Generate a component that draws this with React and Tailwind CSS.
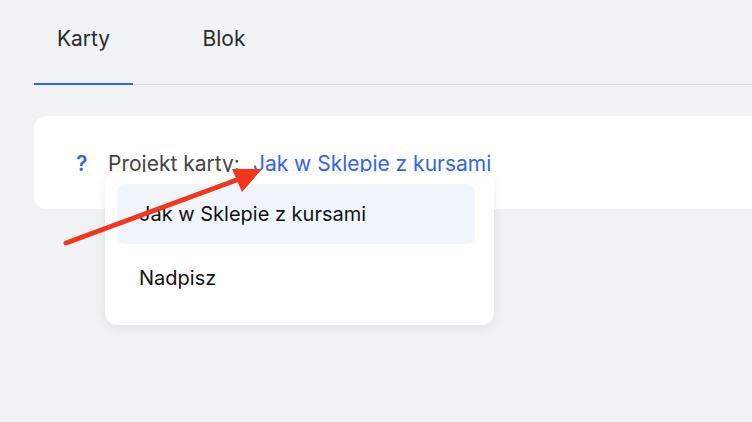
import React from 'react';

function Tabs() {
  return (
    <div className="flex items-end pl-[34px] pt-[22px]">
      <div className="flex">
        <div className="w-[99px] flex flex-col items-center">
          <span className="text-[21px] leading-[34px] text-[#2b2b2b] h-[61px]">Karty</span>
          <div className="h-[2px] w-full bg-[#2f64f0]" />
        </div>
        <div className="w-[136px] flex flex-col items-center">
          <span className="text-[21px] leading-[34px] text-[#2b2b2b] h-[61px] pl-[46px]">Blok</span>
          <div className="h-[1px] w-full bg-[#d9dbde] mt-[1px]" />
        </div>
      </div>
      <div className="flex-1 h-[1px] bg-[#d9dbde]" />
    </div>
  );
}

function Dropdown() {
  return (
    <div className="absolute left-[71px] top-[56px] w-[389px] h-[153px] bg-white rounded-[12px] shadow-[0_2px_12px_rgba(0,0,0,0.08)] pl-[12px] pr-[19px] pt-[12px] flex flex-col">
      <div className="h-[60px] rounded-[8px] bg-[#f0f5fe] flex items-center pl-[22px] text-[20px] text-[#111]">
        Jak w Sklepie z kursami
      </div>
      <div className="h-[68px] flex items-center pl-[22px] text-[20px] text-[#111]">
        Nadpisz
      </div>
    </div>
  );
}

function Arrow() {
  return (
    <svg className="absolute left-0 top-0 pointer-events-none" width="752" height="422" viewBox="0 0 752 422">
      <line x1="66" y1="243" x2="242" y2="178" stroke="#f2361c" strokeWidth="5" strokeLinecap="round" />
      <polygon points="262,169 232,169 242,192" fill="#f2361c" />
    </svg>
  );
}

export default function App() {
  return (
    <div className="relative w-[752px] h-[422px] overflow-hidden bg-[#f0f2f4]" style={{ fontFamily: 'Inter, "Noto Sans", sans-serif' }}>
      <Tabs />
      <div className="relative ml-[34px] mt-[31px] h-[93px] bg-white rounded-l-[12px] flex items-center pl-[42px] pt-[2px] text-[21px]">
        <span className="text-[#3366ee] font-semibold w-[32px]">?</span>
        <span className="text-[#444]">Projekt karty:</span>
        <span className="text-[#3366ee] ml-[13px]">Jak w Sklepie z kursami</span>
        <Dropdown />
      </div>
      <Arrow />
    </div>
  );
}
